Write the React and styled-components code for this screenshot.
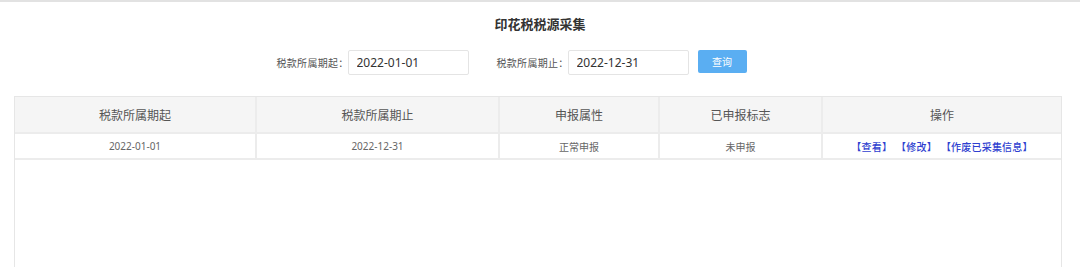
import React from 'react';
import styled, { createGlobalStyle } from 'styled-components';

const GlobalStyle = createGlobalStyle`
  html, body {
    margin: 0;
    padding: 0;
    background: #fff;
    font-family: "Noto Sans", "Noto Sans CJK SC", sans-serif;
    color: #333;
  }
  * {
    box-sizing: border-box;
  }
`;

const columns = [
  { key: 'start', title: '税款所属期起', width: 242 },
  { key: 'end', title: '税款所属期止', width: 243 },
  { key: 'attr', title: '申报属性', width: 160 },
  { key: 'flag', title: '已申报标志', width: 163 },
  { key: 'op', title: '操作', width: 238 },
];

const rows = [
  { start: '2022-01-01', end: '2022-12-31', attr: '正常申报', flag: '未申报' },
];

const gridTemplate = columns.map((c) => `${c.width}px`).join(' ');

const App = () => {
  return (
    <>
      <GlobalStyle />
      <StylePage>
        <StyleTitle>印花税税源采集</StyleTitle>
        <StyleSearchBar>
          <StyleField>
            <StyleLabel>税款所属期起：</StyleLabel>
            <StyleDateInput type='text' defaultValue='2022-01-01' />
          </StyleField>
          <StyleField>
            <StyleLabel>税款所属期止：</StyleLabel>
            <StyleDateInput type='text' defaultValue='2022-12-31' />
          </StyleField>
          <StyleQueryButton type='button'>查询</StyleQueryButton>
        </StyleSearchBar>
        <StyleTable>
          <StyleHeadRow>
            {columns.map((c) => (
              <StyleHeadCell key={c.key}>{c.title}</StyleHeadCell>
            ))}
          </StyleHeadRow>
          {rows.map((r, i) => (
            <StyleBodyRow key={i}>
              <StyleCell>{r.start}</StyleCell>
              <StyleCell>{r.end}</StyleCell>
              <StyleCell>{r.attr}</StyleCell>
              <StyleCell>{r.flag}</StyleCell>
              <StyleCell $last>
                <StyleAction>【查看】</StyleAction>
                <StyleAction>【修改】</StyleAction>
                <StyleAction>【作废已采集信息】</StyleAction>
              </StyleCell>
            </StyleBodyRow>
          ))}
          <StyleEmptyArea />
        </StyleTable>
      </StylePage>
    </>
  );
};

export default App;

const StylePage = styled.main`
  border-top: 2px solid #e2e2e2;
  display: flex;
  flex-direction: column;
  align-items: center;
`;

const StyleTitle = styled.h1`
  margin: 13px 0 0;
  height: 18px;
  line-height: 18px;
  font-size: 13px;
  font-weight: 700;
  color: #333;
`;

const StyleSearchBar = styled.form`
  margin: 17px 0 0;
  display: flex;
  align-items: center;
  gap: 9px;
  padding-right: 57px;
  height: 25px;
`;

const StyleField = styled.label`
  display: flex;
  align-items: center;
  gap: 4px;
  & + & {
    margin-left: 19px;
  }
`;

const StyleLabel = styled.span`
  width: 67px;
  font-size: 10px;
  color: #555;
  white-space: nowrap;
  letter-spacing: 0.3px;
`;

const StyleDateInput = styled.input`
  width: 121px;
  height: 25px;
  border: 1px solid #e4e4e4;
  border-radius: 2px;
  padding: 0 8px;
  font-family: "Noto Sans", "Noto Sans CJK SC", sans-serif;
  font-size: 12px;
  color: #333;
  outline: none;
`;

const StyleQueryButton = styled.button`
  width: 49px;
  height: 23px;
  margin-top: -2px;
  border: none;
  border-radius: 2px;
  background: #5aaef2;
  color: #fff;
  font-family: "Noto Sans", "Noto Sans CJK SC", sans-serif;
  font-size: 10px;
  padding: 0;
`;

const StyleTable = styled.section`
  margin: 21px 0 0 14px;
  width: 1048px;
  border: 1px solid #e6e6e6;
  border-bottom: none;
  align-self: flex-start;
`;

const StyleHeadRow = styled.div`
  display: grid;
  grid-template-columns: ${gridTemplate};
  height: 37px;
  background: #f5f5f5;
  border-bottom: 2px solid #ececec;
`;

const StyleHeadCell = styled.div`
  display: flex;
  align-items: center;
  justify-content: center;
  font-size: 12px;
  color: #555;
  border-right: 2px solid #ececec;
  &:last-child {
    border-right: none;
  }
`;

const StyleBodyRow = styled.div`
  display: grid;
  grid-template-columns: ${gridTemplate};
  height: 26px;
  border-bottom: 2px solid #ececec;
`;

const StyleCell = styled.div`
  display: flex;
  align-items: center;
  justify-content: center;
  gap: 4px;
  font-size: 10px;
  color: #666;
  border-right: ${(p) => (p.$last ? 'none' : '2px solid #ececec')};
`;

const StyleAction = styled.a`
  color: #2f3fd0;
  font-size: 10px;
  font-weight: 500;
  cursor: pointer;
  letter-spacing: 0.2px;
`;

const StyleEmptyArea = styled.div`
  height: 140px;
`;
